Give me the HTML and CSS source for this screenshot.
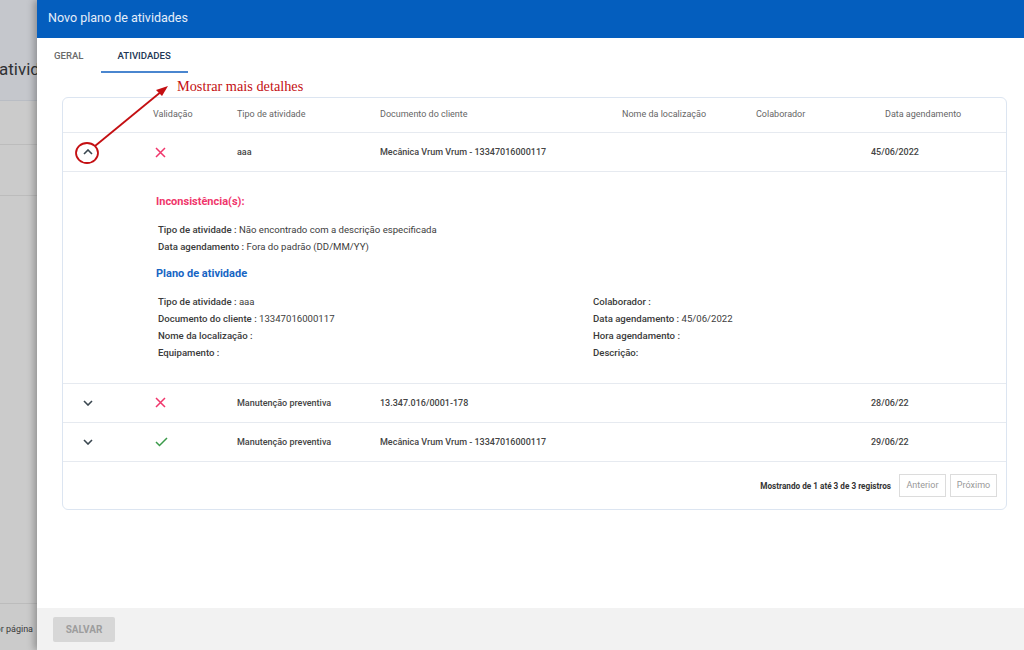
FILE: index.html
```html
<!DOCTYPE html>
<html lang="pt-BR">
<head>
<meta charset="utf-8">
<title>Novo plano de atividades</title>
<link rel="stylesheet" href="styles.css">
</head>
<body>
<div class="page">
  <div class="page-top"><span class="page-title">atividades</span></div>
  <div class="page-row"></div>
  <div class="page-row tall"></div>
  <div class="page-fill"></div>
  <div class="page-foot"><span>Itens por página</span></div>
</div>

<div class="dialog">
  <div class="dlg-header">Novo plano de atividades</div>
  <div class="tabs">
    <div class="tab">GERAL</div>
    <div class="tab active">ATIVIDADES</div>
  </div>
  <div class="dlg-body">
    <div class="card">
      <div class="grid head">
        <div></div>
        <div>Validação</div>
        <div>Tipo de atividade</div>
        <div>Documento do cliente</div>
        <div>Nome da localização</div>
        <div>Colaborador</div>
        <div class="c-date-h">Data agendamento</div>
      </div>
      <div class="grid row">
        <div class="c-chev"><svg width="10" height="6" viewBox="0 0 10 6"><path d="M1 5 L5 1 L9 5" fill="none" stroke="#3a4750" stroke-width="1.6"/></svg></div>
        <div class="c-val"><svg width="11" height="11" viewBox="0 0 11 11"><path d="M1 1 L10 10 M10 1 L1 10" stroke="#f0366b" stroke-width="1.5"/></svg></div>
        <div>aaa</div>
        <div>Mecânica Vrum Vrum - 13347016000117</div>
        <div></div>
        <div></div>
        <div>45/06/2022</div>
      </div>
      <div class="details">
        <div class="d-title err">Inconsistência(s):</div>
        <div class="d-lines">
          <div><b>Tipo de atividade :</b> Não encontrado com a descrição especificada</div>
          <div><b>Data agendamento :</b> Fora do padrão (DD/MM/YY)</div>
        </div>
        <div class="d-title plan">Plano de atividade</div>
        <div class="d-lines two">
          <div><b>Tipo de atividade :</b> aaa</div>
          <div><b>Colaborador :</b></div>
          <div><b>Documento do cliente :</b> 13347016000117</div>
          <div><b>Data agendamento :</b> 45/06/2022</div>
          <div><b>Nome da localização :</b></div>
          <div><b>Hora agendamento :</b></div>
          <div><b>Equipamento :</b></div>
          <div><b>Descrição:</b></div>
        </div>
      </div>
      <div class="grid row">
        <div class="c-chev"><svg width="10" height="6" viewBox="0 0 10 6"><path d="M1 1 L5 5 L9 1" fill="none" stroke="#3a4750" stroke-width="1.6"/></svg></div>
        <div class="c-val"><svg width="11" height="11" viewBox="0 0 11 11"><path d="M1 1 L10 10 M10 1 L1 10" stroke="#f0366b" stroke-width="1.5"/></svg></div>
        <div>Manutenção preventiva</div>
        <div>13.347.016/0001-178</div>
        <div></div>
        <div></div>
        <div>28/06/22</div>
      </div>
      <div class="grid row">
        <div class="c-chev"><svg width="10" height="6" viewBox="0 0 10 6"><path d="M1 1 L5 5 L9 1" fill="none" stroke="#3a4750" stroke-width="1.6"/></svg></div>
        <div class="c-val"><svg width="13" height="10" viewBox="0 0 13 10"><path d="M1 5 L4.5 8.5 L12 1" fill="none" stroke="#3b9a4a" stroke-width="1.5"/></svg></div>
        <div>Manutenção preventiva</div>
        <div>Mecânica Vrum Vrum - 13347016000117</div>
        <div></div>
        <div></div>
        <div>29/06/22</div>
      </div>
      <div class="card-foot">
        <span class="count">Mostrando de 1 até 3 de 3 registros</span>
        <button class="pg">Anterior</button>
        <button class="pg">Próximo</button>
      </div>
    </div>
  </div>
  <div class="dlg-foot">
    <button class="save">SALVAR</button>
  </div>
</div>

<div class="note">Mostrar mais detalhes</div>
<svg class="note-arrow" width="1024" height="650" viewBox="0 0 1024 650">
  <ellipse cx="87" cy="153" rx="11" ry="10" fill="none" stroke="#c40f12" stroke-width="1.8"/>
  <path d="M95 146 L162 91" stroke="#c40f12" stroke-width="1.8" fill="none"/>
  <path d="M168 86 L156 90 L162 96 Z" fill="#c40f12"/>
</svg>
</body>
</html>
```
FILE: styles.css
```css
* { box-sizing: border-box; }
html, body { margin: 0; padding: 0; }
body {
  width: 1024px;
  height: 650px;
  overflow: hidden;
  font-family: Roboto, "Liberation Sans", sans-serif;
  position: relative;
  background: #cbcbcb;
}

/* dimmed page behind the dialog */
.page {
  width: 1024px;
  height: 650px;
  display: flex;
  flex-direction: column;
  background: #cbcbcb;
}
.page-top {
  height: 101px;
  background: #c5c7cc;
  border-bottom: 1px solid #b9bdc4;
  display: flex;
  align-items: center;
  padding-top: 38px;
}
.page-title {
  font-size: 17px;
  color: #2f3134;
  text-indent: -1px;
  white-space: nowrap;
}
.page-row {
  height: 44px;
  border-bottom: 1px solid #bcbcbc;
}
.page-row.tall { height: 51px; }
.page-fill { flex: 1; }
.page-foot {
  height: 47px;
  border-top: 1px solid #bcbcbc;
  display: flex;
  align-items: center;
  padding-top: 4px;
}
.page-foot span {
  width: 33px;
  overflow: hidden;
  white-space: nowrap;
  direction: rtl;
  font-size: 9px;
  color: #3a3a3a;
}

/* modal dialog over the page */
.dialog {
  position: absolute;
  left: 37px;
  top: 0;
  right: 0;
  bottom: 0;
  background: #fff;
  display: flex;
  flex-direction: column;
  box-shadow: -3px 0 7px rgba(0,0,0,0.28);
}
.dlg-header {
  height: 38px;
  background: #045ebe;
  color: #e6eefa;
  font-size: 12.5px;
  display: flex;
  align-items: center;
  padding-left: 11px;
  padding-bottom: 3px;
}
.tabs {
  height: 35px;
  display: flex;
}
.tab {
  padding: 0 17px;
  font-size: 9.6px;
  font-weight: 500;
  color: #6a6a6a;
  display: flex;
  align-items: center;
  padding-top: 1px;
  border-bottom: 2px solid transparent;
}
.tab.active {
  color: #223655;
  border-bottom-color: #4a86cf;
}
.dlg-body {
  flex: 1;
  padding: 24px 17px 0 25px;
}
.card {
  border: 1px solid #dce5f1;
  border-radius: 6px;
}
.grid {
  display: grid;
  grid-template-columns: 90px 84px 143px 242px 134px 115px 1fr;
  align-items: center;
  font-size: 9px;
}
.head {
  height: 35px;
  color: #666;
  border-bottom: 1px solid #e6eaf0;
  padding-bottom: 2px;
}
.c-date-h { padding-left: 14px; }
.row {
  height: 39px;
  color: #444;
  font-weight: 500;
  border-bottom: 1px solid #e6eaf0;
}
.c-chev { padding-left: 20px; display: flex; }
.c-val { padding-left: 2px; display: flex; }

.details {
  padding: 22px 0 21px 93px;
  border-bottom: 1px solid #e6eaf0;
  color: #3d3d3d;
}
.d-title {
  font-size: 11px;
  font-weight: 700;
  line-height: 16px;
}
.d-title.err { color: #f0366b; }
.d-title.plan { color: #1665c4; margin-top: 10px; }
.d-lines {
  font-size: 9.6px;
  line-height: 17.3px;
  padding-left: 2px;
  margin-top: 11px;
}
.d-lines b { font-weight: 500; color: #3a3a3a; }
.d-lines.two {
  display: grid;
  grid-template-columns: 435px 1fr;
}

.card-foot {
  height: 47px;
  display: flex;
  align-items: center;
  justify-content: flex-end;
  padding-right: 9px;
  gap: 4px;
}
.count {
  font-size: 8.2px;
  font-weight: 700;
  color: #333;
  margin-right: 4px;
  padding-top: 1px;
}
.pg {
  width: 47px;
  height: 23px;
  border: 1px solid #dcdcdc;
  background: #fff;
  font-family: Roboto, sans-serif;
  font-size: 9px;
  color: #999;
  padding: 0;
}

.dlg-foot {
  height: 42px;
  background: #f2f2f2;
  display: flex;
  align-items: center;
  padding-left: 16px;
}
.save {
  width: 62px;
  height: 25px;
  border: none;
  border-radius: 2px;
  background: #d7d7d7;
  color: #9d9d9d;
  font-family: Roboto, sans-serif;
  font-weight: 700;
  font-size: 10px;
}

/* annotation overlay */
.note {
  position: absolute;
  left: 177px;
  top: 78px;
  font-family: "Liberation Serif", serif;
  font-size: 14.3px;
  color: #c40f12;
}
.note-arrow {
  position: absolute;
  left: 0;
  top: 0;
  pointer-events: none;
}
```
